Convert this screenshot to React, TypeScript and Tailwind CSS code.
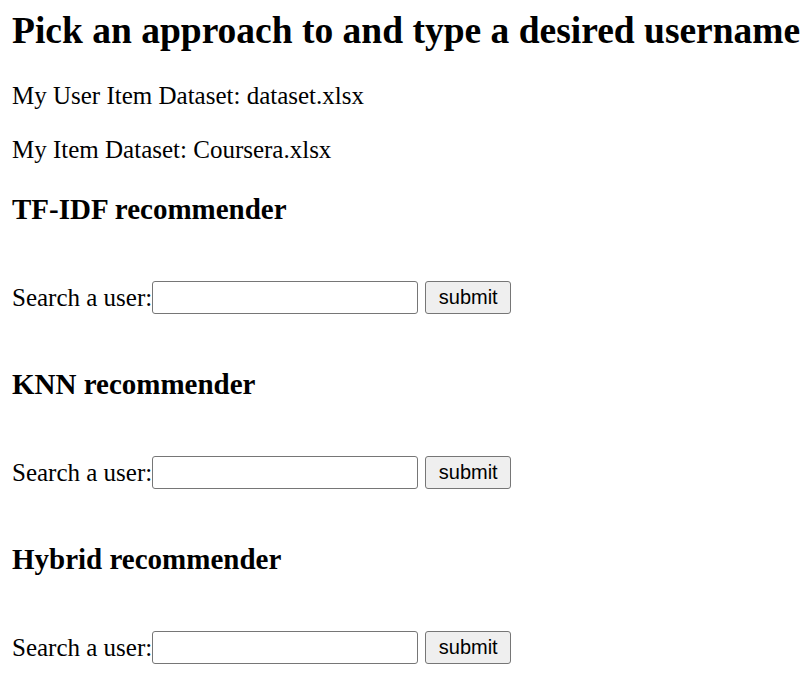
// Plain form page: three recommender blocks, each with a username search field.

const sections = ['TF-IDF recommender', 'KNN recommender', 'Hybrid recommender'];

function SearchRow() {
  return (
    <form className="mt-[55px] flex items-start" onSubmit={(e) => e.preventDefault()}>
      <label className="mt-[2px] text-[25px] leading-[30px]">Search a user:</label>
      <input
        type="text"
        className="h-[33px] w-[266px] rounded-[3px] border border-[#767676] bg-white px-1 text-[20px] outline-none"
      />
      <button
        type="submit"
        className="ml-[7px] flex h-[33px] w-[86px] items-center justify-center rounded-[3px] border border-[#767676] bg-[#efefef] pb-[2px] text-[20px] leading-none text-black"
        style={{ fontFamily: '"Liberation Sans", Arial, sans-serif' }}
      >
        submit
      </button>
    </form>
  );
}

export default function App() {
  return (
    <main
      className="min-h-screen bg-white pl-[12px] text-black"
      style={{ fontFamily: '"Liberation Serif", "Times New Roman", serif' }}
    >
      <h1 className="pt-[10px] whitespace-nowrap text-[37.5px] font-bold leading-[42px]">
        Pick an approach to and type a desired username
      </h1>
      <p className="mt-[29px] text-[25px] leading-[30px]">My User Item Dataset: dataset.xlsx</p>
      <p className="mt-[24px] text-[25px] leading-[30px]">My Item Dataset: Coursera.xlsx</p>

      {sections.map((title, i) => (
        <section key={title} className={i === 0 ? 'mt-[27px]' : 'mt-[53px]'}>
          <h3 className="text-[29px] font-bold leading-[34px]">{title}</h3>
          <SearchRow />
        </section>
      ))}
    </main>
  );
}
